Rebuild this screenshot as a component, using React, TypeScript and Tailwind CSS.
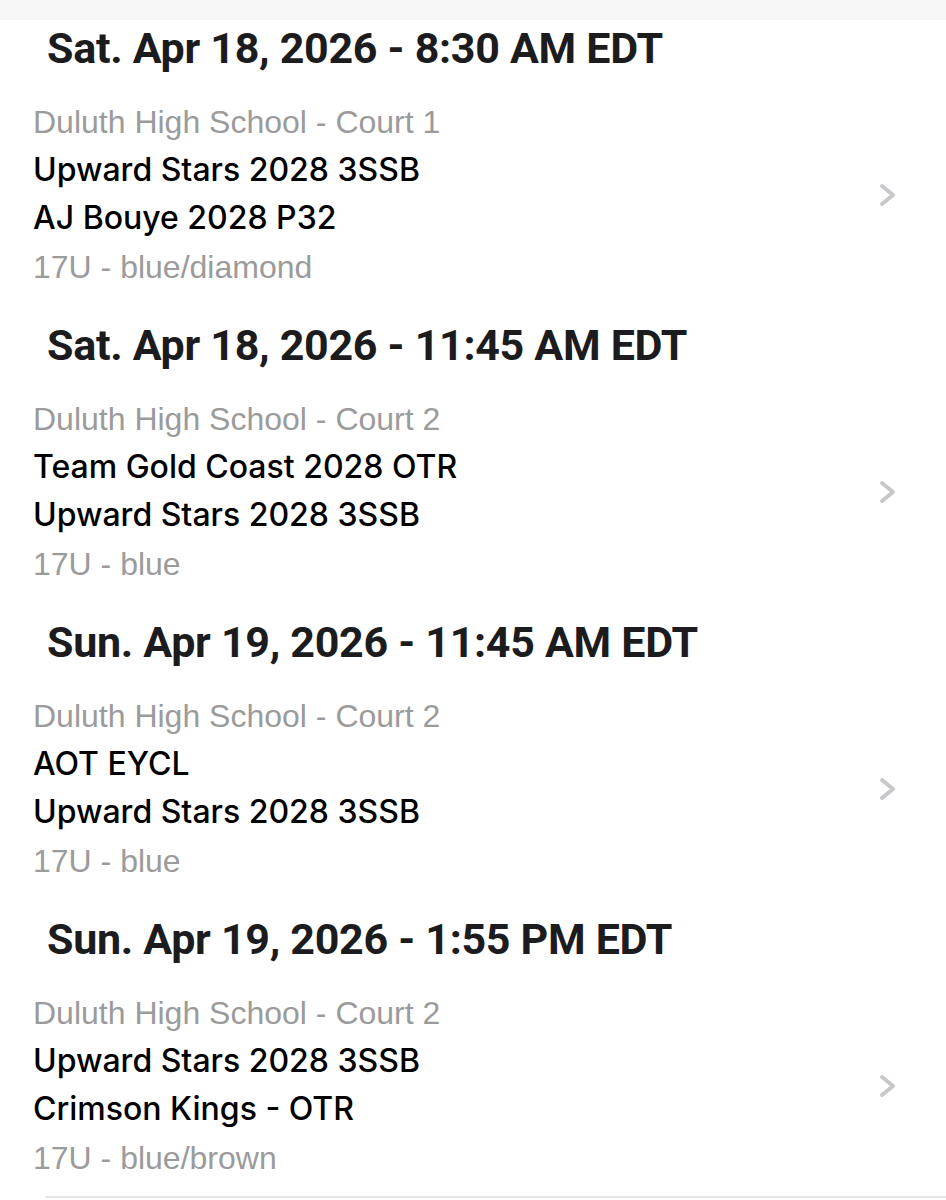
import React from "react";

type Game = {
  date: string;
  court: string;
  team1: string;
  team2: string;
  division: string;
};

const games: Game[] = [
  {
    date: "Sat. Apr 18, 2026 - 8:30 AM EDT",
    court: "Duluth High School - Court 1",
    team1: "Upward Stars 2028 3SSB",
    team2: "AJ Bouye 2028 P32",
    division: "17U - blue/diamond",
  },
  {
    date: "Sat. Apr 18, 2026 - 11:45 AM EDT",
    court: "Duluth High School - Court 2",
    team1: "Team Gold Coast 2028 OTR",
    team2: "Upward Stars 2028 3SSB",
    division: "17U - blue",
  },
  {
    date: "Sun. Apr 19, 2026 - 11:45 AM EDT",
    court: "Duluth High School - Court 2",
    team1: "AOT EYCL",
    team2: "Upward Stars 2028 3SSB",
    division: "17U - blue",
  },
  {
    date: "Sun. Apr 19, 2026 - 1:55 PM EDT",
    court: "Duluth High School - Court 2",
    team1: "Upward Stars 2028 3SSB",
    team2: "Crimson Kings - OTR",
    division: "17U - blue/brown",
  },
];

function Chevron() {
  return (
    <svg width="20" height="26" viewBox="0 0 20 26" fill="none">
      <path
        d="M4 4 L15 13 L4 22"
        stroke="#c7c7cc"
        strokeWidth="4"
        strokeLinecap="round"
        strokeLinejoin="round"
      />
    </svg>
  );
}

function Section({ g, last }: { g: Game; last: boolean }) {
  return (
    <div>
      <div className="flex h-[56px] items-center pl-[47px]">
        <h2 className="font-['Roboto',sans-serif] text-[43px] font-bold tracking-[-0.3px] text-[#1c1c1e]">
          {g.date}
        </h2>
      </div>
      <div className={`flex items-center pr-[48px] pl-[33px] pt-[22px] ${last ? "pb-[13px]" : "pb-[25px]"}`}>
        <div className="flex flex-1 flex-col font-['Liberation_Sans',Arial,sans-serif] text-[32px]">
          <div className="flex h-[48px] items-center text-[#9b9b9b]">{g.court}</div>
          <div className="flex h-[48px] items-center font-['Inter',sans-serif] font-medium text-black">
            {g.team1}
          </div>
          <div className="flex h-[48px] items-center font-['Inter',sans-serif] font-medium text-black">
            {g.team2}
          </div>
          <div className="flex h-[50px] items-center text-[#9b9b9b]">{g.division}</div>
        </div>
        <Chevron />
      </div>
    </div>
  );
}

export default function App() {
  return (
    <div className="min-h-[1200px] w-[946px] bg-white">
      <div className="h-[20px] bg-[#f7f7f7]" />
      {games.map((g, i) => (
        <Section key={i} g={g} last={i === games.length - 1} />
      ))}
      <div className="ml-[45px] border-t-2 border-[#e5e5ea]" />
    </div>
  );
}
